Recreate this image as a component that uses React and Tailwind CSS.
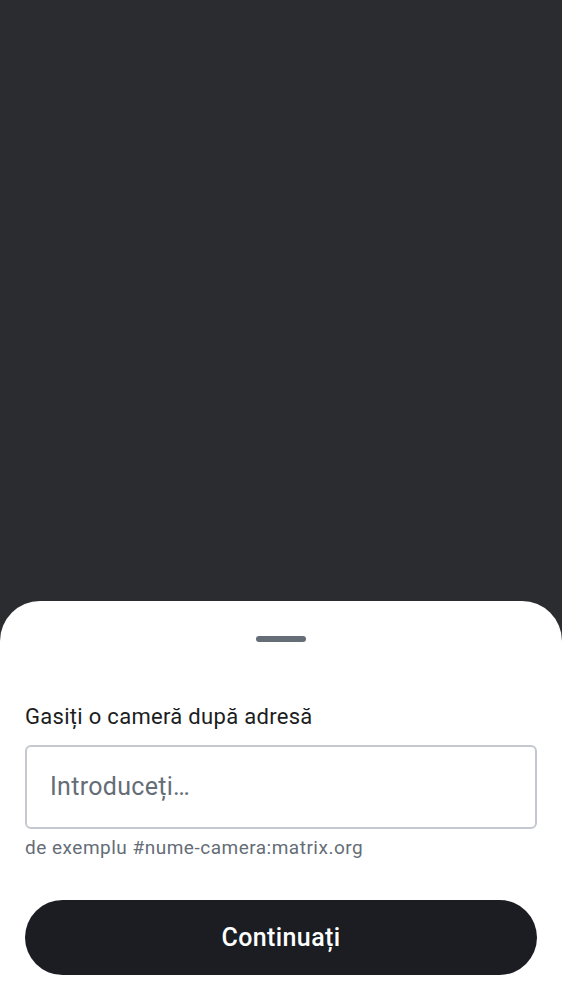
import React from 'react';

export default function App() {
    return (
        <div className="h-[1000px] flex flex-col bg-[#2b2c2f]" style={{ fontFamily: 'Roboto, "Noto Sans", sans-serif' }}>
            <div className="flex-1"></div>

            {/* Bottom sheet */}
            <div className="bg-white rounded-t-[40px] px-[25px] pt-[35px] pb-[25px] flex flex-col">
                <div className="self-center w-[50px] h-[6px] rounded-full bg-[#656d77]"></div>

                <label className="mt-[61px] text-[22px] leading-[28px] tracking-[0.3px] text-[#1b1d22]">
                    Gasiți o cameră după adresă
                </label>

                <div className="mt-[14px] h-[84px] rounded-[6px] border-2 border-[#c5c9cf] flex items-center px-[23px]">
                    <input
                        className="w-full bg-transparent outline-none text-[25px] tracking-[0.3px] text-[#1b1d22] placeholder:text-[#656d77]"
                        placeholder="Introduceți…"
                    />
                </div>

                <p className="mt-[6px] text-[19px] leading-[26px] tracking-[0.5px] text-[#656d77]">
                    de exemplu #nume-camera:matrix.org
                </p>

                <button className="mt-[39px] h-[75px] rounded-full bg-[#1b1d22] text-white text-[25px] tracking-[0.4px] font-medium">
                    Continuați
                </button>
            </div>
        </div>
    );
}
